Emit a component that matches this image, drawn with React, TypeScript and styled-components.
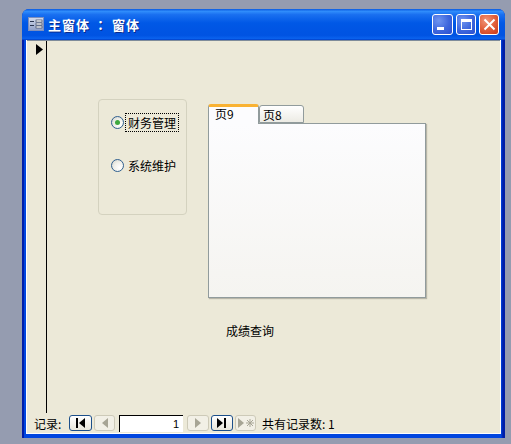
import React from 'react';
import styled, { createGlobalStyle } from 'styled-components';

const GlobalStyle = createGlobalStyle`
  html, body {
    margin: 0;
    padding: 0;
    background: #959cb0;
    overflow: hidden;
  }
  body {
    font-family: "Noto Sans CJK SC", "Liberation Sans", sans-serif;
    font-size: 12px;
    color: #000;
  }
`;

const Desktop = styled.div`
  width: 511px;
  height: 444px;
  padding: 9px 6px 6px 22px;
  box-sizing: border-box;
`;

const Window = styled.div`
  width: 483px;
  height: 429px;
  box-sizing: border-box;
  display: flex;
  flex-direction: column;
  border-radius: 7px 7px 0 0;
  overflow: hidden;
  background: linear-gradient(to right, #001ea8 0 2px, #0046e0 2px 4px, #0046e0 calc(100% - 4px), #001ea8 calc(100% - 2px));
`;

const TitleBar = styled.div`
  height: 31px;
  flex: none;
  display: flex;
  align-items: center;
  padding: 0 6px 1px 6px;
  box-sizing: border-box;
  background: linear-gradient(to bottom, #0a5ae0 0%, #2f8cfb 8%, #1a70f0 18%, #0058e6 45%, #0053e2 85%, #0a62ee 95%, #003fc8 100%);
`;

const TitleIcon = styled.svg`
  width: 16px;
  height: 14px;
  flex: none;
`;

const TitleText = styled.span`
  margin-left: 4px;
  color: #fff;
  font-family: "Noto Sans CJK TC", "Noto Sans CJK SC", sans-serif;
  font-size: 13px;
  font-weight: 700;
  letter-spacing: 1px;
  white-space: pre;
  text-shadow: 1px 1px 0 #0a2a8c;
`;

const Controls = styled.div`
  margin-left: auto;
  display: flex;
  gap: 3px;
`;

const ControlButton = styled.div<{ $close?: boolean; $wide?: boolean }>`
  width: ${(p) => (p.$wide ? '21px' : '20px')};
  height: 21px;
  box-sizing: border-box;
  border: 1px solid #fff;
  border-radius: 3px;
  display: flex;
  align-items: center;
  justify-content: center;
  background: ${(p) =>
    p.$close
      ? 'radial-gradient(circle at 35% 30%, #f0967a 0%, #e2603c 50%, #c8391a 100%)'
      : 'radial-gradient(circle at 30% 30%, #6f95f0 0%, #3d66dc 55%, #2a4fd0 100%)'};
`;

const ControlIcon = styled.svg`
  width: 15px;
  height: 15px;
`;

const Body = styled.div`
  flex: 1;
  min-height: 0;
  margin: 0 4px 4px 4px;
  padding: 0 1px 1px 1px;
  background: #fff;
  display: flex;
  flex-direction: column;
`;

const Client = styled.div`
  flex: 1;
  min-height: 0;
  display: flex;
  flex-direction: column;
  background: #ece9d8;
  border-top: 1px solid #7f8c9a;
`;

const Main = styled.div`
  flex: 1;
  min-height: 0;
  display: flex;
`;

const Selector = styled.div`
  flex: none;
  width: 10px;
  border-right: 1px solid #000;
  padding: 3px 0 0 9px;
`;

const Arrow = styled.svg`
  display: block;
  width: 7px;
  height: 11px;
`;

const Form = styled.div`
  flex: 1;
  padding: 58px 0 0 51px;
  display: flex;
  flex-direction: column;
`;

const TopRow = styled.div`
  display: flex;
  align-items: flex-start;
  gap: 21px;
`;

const OptionGroup = styled.div`
  width: 89px;
  height: 116px;
  box-sizing: border-box;
  border: 1px solid #d4d2bf;
  border-radius: 4px;
  padding: 14px 0 0 12px;
  display: flex;
  flex-direction: column;
  gap: 26px;
`;

const Option = styled.div`
  display: flex;
  align-items: center;
  height: 17px;
  gap: 2px;
`;

const Radio = styled.span<{ $checked?: boolean }>`
  width: 13px;
  height: 13px;
  flex: none;
  box-sizing: border-box;
  border-radius: 50%;
  border: 1px solid #2f5f8f;
  background: radial-gradient(circle at 70% 70%, #fff 0%, #f0f0ea 50%, #cfcfc6 100%);
  display: flex;
  align-items: center;
  justify-content: center;

  &::after {
    content: '';
    display: ${(p) => (p.$checked ? 'block' : 'none')};
    width: 5px;
    height: 5px;
    border-radius: 50%;
    background: #3fa83f;
  }
`;

const OptionLabel = styled.span<{ $focused?: boolean }>`
  line-height: 15px;
  padding: 0 1px;
  white-space: nowrap;
  outline: ${(p) => (p.$focused ? '1px dotted #000' : 'none')};
  border: 1px solid transparent;
`;

const TabControl = styled.div`
  margin-top: 5px;
  width: 218px;
  display: flex;
  flex-direction: column;
`;

const TabStrip = styled.div`
  display: flex;
  align-items: flex-end;
  height: 19px;
  position: relative;
  z-index: 1;
`;

const Tab = styled.div<{ $active?: boolean }>`
  width: ${(p) => (p.$active ? '51px' : '45px')};
  height: ${(p) => (p.$active ? '20px' : '18px')};
  margin-bottom: ${(p) => (p.$active ? '-1px' : '0')};
  box-sizing: border-box;
  border: 1px solid #919b9c;
  border-bottom: ${(p) => (p.$active ? 'none' : '1px solid #919b9c')};
  border-top: ${(p) => (p.$active ? '3px solid #f9b233' : '1px solid #919b9c')};
  border-radius: 3px 3px 0 0;
  padding-left: ${(p) => (p.$active ? '6px' : '3px')};
  line-height: ${(p) => (p.$active ? '14px' : '17px')};
  font-size: 12px;
  background: ${(p) => (p.$active ? '#fcfcfe' : 'linear-gradient(to bottom, #fff, #ecebe4)')};
`;

const TabPage = styled.div`
  height: 175px;
  box-sizing: border-box;
  border: 1px solid #919b9c;
  background: linear-gradient(to bottom, #fcfcfe, #f5f4f0);
  box-shadow: 1px 1px 1px #b8b6a8;
`;

const CaptionRow = styled.div`
  margin-top: 24px;
  padding-left: 128px;
  line-height: 18px;
`;

const RecordBar = styled.div`
  height: 20px;
  flex: none;
  display: flex;
  align-items: center;
  padding: 0 0 0 7px;
`;

const RecordLabel = styled.span`
  width: 35px;
  flex: none;
  white-space: nowrap;
`;

const NavButton = styled.div<{ $on?: boolean; $w?: number }>`
  width: ${(p) => p.$w ?? 22}px;
  height: 16px;
  margin-right: 2px;
  box-sizing: border-box;
  flex: none;
  border-radius: 3px;
  border: 1px solid ${(p) => (p.$on ? '#1c4f8a' : '#cdcab8')};
  background: ${(p) => (p.$on ? 'linear-gradient(to bottom, #fff, #e8e6da)' : '#f2f0e6')};
  display: flex;
  align-items: center;
  justify-content: center;
`;

const NavIcon = styled.svg`
  width: 18px;
  height: 10px;
`;

const RecordInput = styled.div`
  width: 64px;
  height: 17px;
  margin: 0 4px 0 2px;
  box-sizing: border-box;
  flex: none;
  background: #fff;
  border-top: 1px solid #000;
  border-left: 1px solid #000;
  text-align: right;
  padding-right: 4px;
  line-height: 16px;
  font-size: 11px;
  font-family: "Liberation Sans", sans-serif;
`;

const RecordCount = styled.span`
  margin-left: 4px;
  white-space: nowrap;
`;

export default function App() {
  return (
    <Desktop>
      <GlobalStyle />
      <Window>
        <TitleBar>
          <TitleIcon viewBox="0 0 16 14">
            <defs>
              <linearGradient id="titleIconFill" x1="0" y1="0" x2="0" y2="1">
                <stop offset="0" stopColor="#d5dcec" />
                <stop offset="1" stopColor="#8f9ec6" />
              </linearGradient>
            </defs>
            <rect x="0.5" y="0.5" width="15" height="13" fill="url(#titleIconFill)" stroke="#7d8fbd" />
            <rect x="2" y="4" width="4" height="1" fill="#2a3550" />
            <rect x="2" y="8" width="4" height="1" fill="#2a3550" />
            <rect x="8" y="3" width="6" height="2" fill="#fff" stroke="#2a3550" strokeWidth="0.6" />
            <rect x="8" y="6" width="6" height="2" fill="#fff" stroke="#2a3550" strokeWidth="0.6" />
            <rect x="8" y="9" width="6" height="2" fill="#fff" stroke="#2a3550" strokeWidth="0.6" />
          </TitleIcon>
          <TitleText>主窗体 ： 窗体</TitleText>
          <Controls>
            <ControlButton $wide>
              <ControlIcon viewBox="0 0 15 15">
                <rect x="2" y="10" width="7" height="3" fill="#fff" />
              </ControlIcon>
            </ControlButton>
            <ControlButton>
              <ControlIcon viewBox="0 0 15 15">
                <rect x="2.5" y="2.5" width="10" height="10" fill="none" stroke="#fff" />
                <rect x="2" y="2" width="11" height="3" fill="#fff" />
              </ControlIcon>
            </ControlButton>
            <ControlButton $close>
              <ControlIcon viewBox="0 0 15 15">
                <path d="M2.5 2.5 L12.5 12.5 M12.5 2.5 L2.5 12.5" stroke="#fff" strokeWidth="2" />
              </ControlIcon>
            </ControlButton>
          </Controls>
        </TitleBar>
        <Body>
          <Client>
            <Main>
              <Selector>
                <Arrow viewBox="0 0 7 11">
                  <path d="M0 0 L7 5.5 L0 11 Z" fill="#000" />
                </Arrow>
              </Selector>
              <Form>
                <TopRow>
                  <OptionGroup>
                    <Option>
                      <Radio $checked />
                      <OptionLabel $focused>财务管理</OptionLabel>
                    </Option>
                    <Option>
                      <Radio />
                      <OptionLabel>系统维护</OptionLabel>
                    </Option>
                  </OptionGroup>
                  <TabControl>
                    <TabStrip>
                      <Tab $active>页9</Tab>
                      <Tab>页8</Tab>
                    </TabStrip>
                    <TabPage />
                  </TabControl>
                </TopRow>
                <CaptionRow>成绩查询</CaptionRow>
              </Form>
            </Main>
            <RecordBar>
              <RecordLabel>记录:</RecordLabel>
              <NavButton $on $w={23}>
                <NavIcon viewBox="0 0 18 10">
                  <rect x="4" y="0" width="2" height="10" fill="#000" />
                  <path d="M13 0 L7 5 L13 10 Z" fill="#000" />
                </NavIcon>
              </NavButton>
              <NavButton $w={21}>
                <NavIcon viewBox="0 0 18 10">
                  <path d="M12 0 L6 5 L12 10 Z" fill="#a7a595" />
                </NavIcon>
              </NavButton>
              <RecordInput>1</RecordInput>
              <NavButton>
                <NavIcon viewBox="0 0 18 10">
                  <path d="M6 0 L12 5 L6 10 Z" fill="#a7a595" />
                </NavIcon>
              </NavButton>
              <NavButton $on>
                <NavIcon viewBox="0 0 18 10">
                  <path d="M4 0 L10 5 L4 10 Z" fill="#000" />
                  <rect x="11" y="0" width="2" height="10" fill="#000" />
                </NavIcon>
              </NavButton>
              <NavButton $w={21}>
                <NavIcon viewBox="0 0 18 10">
                  <path d="M1 0 L7 5 L1 10 Z" fill="#a7a595" />
                  <path d="M13 1 V9 M9 5 H17 M10 2 L16 8 M16 2 L10 8" stroke="#a7a595" />
                </NavIcon>
              </NavButton>
              <RecordCount>共有记录数: 1</RecordCount>
            </RecordBar>
          </Client>
        </Body>
      </Window>
    </Desktop>
  );
}
